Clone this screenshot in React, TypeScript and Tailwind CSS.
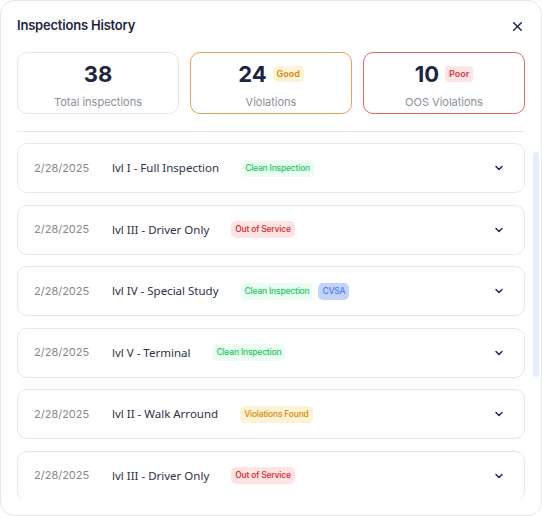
import { X, ChevronDown } from "lucide-react";

type Badge = { label: string; tone: "green" | "red" | "amber" | "blue" };

interface Inspection {
  date: string;
  title: string;
  badges: Badge[];
}

const badgeTone: Record<Badge["tone"], string> = {
  green: "bg-[#ecfdf3] text-[#22c55e]",
  red: "bg-[#fee4e4] text-[#dc2626]",
  amber: "bg-[#fef3d4] text-[#d98a0b]",
  blue: "bg-[#c3d3fc] text-[#4f7cf2]",
};

const inspections: Inspection[] = [
  { date: "2/28/2025", title: "lvl I - Full Inspection", badges: [{ label: "Clean Inspection", tone: "green" }] },
  { date: "2/28/2025", title: "lvl III - Driver Only", badges: [{ label: "Out of Service", tone: "red" }] },
  {
    date: "2/28/2025",
    title: "lvl IV - Special Study",
    badges: [
      { label: "Clean Inspection", tone: "green" },
      { label: "CVSA", tone: "blue" },
    ],
  },
  { date: "2/28/2025", title: "lvl V - Terminal", badges: [{ label: "Clean Inspection", tone: "green" }] },
  { date: "2/28/2025", title: "lvl II - Walk Arround", badges: [{ label: "Violations Found", tone: "amber" }] },
  { date: "2/28/2025", title: "lvl III - Driver Only", badges: [{ label: "Out of Service", tone: "red" }] },
];

const StatCard = ({
  value,
  label,
  border,
  tag,
}: {
  value: number;
  label: string;
  border: string;
  tag?: { text: string; className: string };
}) => (
  <div className={`flex-1 h-[62px] rounded-[10px] border ${border} flex flex-col items-center pt-[6px]`}>
    <div className="flex items-center gap-[6px] h-[30px]">
      <span className="text-[22px] font-bold text-[#1c2541] leading-none">{value}</span>
      {tag && (
        <span className={`text-[9px] font-semibold px-[4px] h-[16px] flex items-center rounded-[4px] ${tag.className}`}>
          {tag.text}
        </span>
      )}
    </div>
    <span className="mt-[5px] text-[11px] text-[#8a8f98] leading-[16px]">{label}</span>
  </div>
);

export default function App() {
  return (
    <div className="w-[542px] h-[516px] bg-white font-['Inter',sans-serif]">
      <div className="w-full h-full rounded-[14px] border border-[#e6e7ea] flex flex-col overflow-hidden">
        {/* Header */}
        <div className="flex items-center justify-between pl-[16px] pr-[16px] pt-[15px] h-[35px]">
          <h2 className="text-[13px] font-semibold text-[#1d2640] tracking-[-0.2px]">Inspections History</h2>
          <X className="w-[15px] h-[15px] text-[#1f2d52]" strokeWidth={2.4} />
        </div>

        {/* Stats */}
        <div className="flex gap-[11px] px-[16px] mt-[16px]">
          <StatCard value={38} label="Total inspections" border="border-[#e6e7ea]" />
          <StatCard
            value={24}
            label="Violations"
            border="border-[#e4a35a]"
            tag={{ text: "Good", className: "bg-[#fef3d4] text-[#d98a0b]" }}
          />
          <StatCard
            value={10}
            label="OOS Violations"
            border="border-[#da6a66]"
            tag={{ text: "Poor", className: "bg-[#fee4e4] text-[#d43c3c]" }}
          />
        </div>

        <div className="mx-[16px] mt-[17px] h-px bg-[#e6e7ea]" />

        {/* List */}
        <div className="flex flex-1 min-h-0 mt-[11px] mb-[16px]">
          <div className="flex-1 flex flex-col gap-[11.5px] pl-[16px] pr-[8px] overflow-hidden">
            {inspections.map((item, i) => (
              <div
                key={i}
                className="shrink-0 h-[50px] rounded-[10px] border border-[#e6e7ea] flex items-center pl-[16px] pr-[19px]"
              >
                <span className="w-[78px] text-[11px] text-[#85898f]">{item.date}</span>
                <span className="text-[11.5px] text-[#2c3246] font-['Noto_Sans',sans-serif]">
                  {item.title}
                </span>
                <div className="flex items-center gap-[5px] ml-[22px]">
                  {item.badges.map((b) => (
                    <span
                      key={b.label}
                      className={`text-[8.5px] font-medium h-[17px] px-[4px] tracking-[-0.2px] rounded-[5px] flex items-center ${badgeTone[b.tone]}`}
                    >
                      {b.label}
                    </span>
                  ))}
                </div>
                <ChevronDown className="ml-auto w-[12px] h-[12px] text-[#1f2d52]" strokeWidth={3} />
              </div>
            ))}
          </div>
          {/* Scrollbar */}
          <div className="w-[6px] mr-[2px] pt-[9px]">
            <div className="h-[225px] rounded-full bg-[#e6eef9]" />
          </div>
        </div>
      </div>
    </div>
  );
}
